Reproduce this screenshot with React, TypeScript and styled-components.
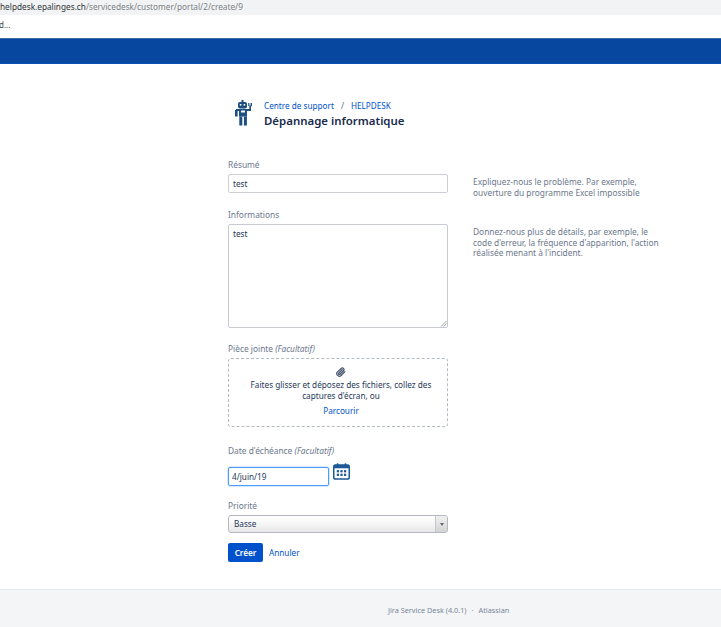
import React from "react";
import styled, { createGlobalStyle } from "styled-components";

const Global = createGlobalStyle`
  html, body { margin: 0; padding: 0; background: #fff; }
  body { font-family: "Noto Sans", "Open Sans", "Liberation Sans", sans-serif; font-size: 8.2px; color: #172b4d; overflow: hidden; }
`;

const Page = styled.div`
  width: 721px; height: 627px; display: flex; flex-direction: column; overflow: hidden;
`;
const UrlBar = styled.div`
  height: 15px; flex: none; background: #f1f3f4; font-size: 8.25px; line-height: 13px; color: #7d8185; white-space: nowrap;
  b { font-weight: 400; color: #303236; }
`;
const BookmarkBar = styled.div`
  height: 23px; flex: none; background: #fff; font-size: 8px; line-height: 20px; color: #444; margin-left: -1px;
`;
const Header = styled.div`
  height: 26px; flex: none; box-sizing: border-box; background: #0747a0; border-top: 1px solid #3a6aa8; border-bottom: 1px solid #0a50b4;
`;
const Main = styled.main`
  flex: 1; display: grid; grid-template-columns: 220px 190px; column-gap: 25px; align-content: start; padding: 35px 0 0 228px;
`;
const PageHead = styled.div`
  grid-column: 1 / 3; display: flex; gap: 12px; height: 42px; margin-bottom: 17px;
`;
const Avatar = styled.svg`
  width: 23px; height: 28px; flex: none; margin-top: 1px; margin-left: 1px;
`;
const HeadText = styled.div`
  display: flex; flex-direction: column;
`;
const Crumbs = styled.div`
  font-size: 8.2px; line-height: 13px; color: #0052cc; display: flex; gap: 7px;
  span { color: #5e6c84; }
`;
const Title = styled.h1`
  margin: 0; font-size: 11.45px; line-height: 18px; font-weight: 600; color: #172b4d;
`;
const Field = styled.div<{ $h: number }>`
  grid-column: 1; height: ${(p) => p.$h}px;
`;
const Help = styled.div<{ $h: number }>`
  grid-column: 2; height: ${(p) => p.$h}px; box-sizing: border-box; padding-top: 19px; font-size: 8.35px; line-height: 10.5px; color: #6b778c;
`;
const Label = styled.div`
  font-size: 8.35px; line-height: 13px; color: #6b778c; margin-bottom: 3px;
  em { font-style: italic; }
`;
const Input = styled.div`
  box-sizing: border-box; height: 19px; width: 100%; border: 1px solid #ccd0d6; border-radius: 2px; padding: 0 4px; font-size: 8.2px; line-height: 17px; color: #253858; background: #fff;
`;
const Area = styled.div`
  box-sizing: border-box; position: relative; height: 104px; border: 1px solid #c8ccd2; border-radius: 2px; padding: 2px 4px; font-size: 8.2px; line-height: 14px; color: #253858;
`;
const Grip = styled.svg`
  position: absolute; right: 0; bottom: 0; width: 7px; height: 7px;
`;
const Drop = styled.div`
  box-sizing: border-box; height: 69px; border: 1px dashed #b3bac5; border-radius: 3px; display: flex; flex-direction: column; align-items: center; text-align: center; padding: 8px 0 0 6px; font-size: 8.2px; line-height: 11px; color: #253858;
`;
const ClipIcon = styled.svg`
  width: 10px; height: 10px; margin-bottom: 2px; flex: none;
`;
const Browse = styled.a`
  color: #0052cc; margin-top: 4px; display: block;
`;
const DateRow = styled.div`
  display: flex; align-items: flex-start; gap: 4px; margin-top: 6px;
`;
const DateInput = styled.div`
  box-sizing: border-box; width: 101px; height: 19px; margin-top: 4px; border: 1px solid #4c9aff; border-radius: 2px; padding: 0 3px; font-size: 8.2px; line-height: 17px; color: #253858; box-shadow: 0 0 0 0.5px #b3d4ff;
`;
const CalIcon = styled.svg`
  width: 17px; height: 17px; flex: none;
`;
const Select = styled.div`
  box-sizing: border-box; height: 18px; border: 1px solid #b5b9bf; border-radius: 3px; display: flex; justify-content: space-between; background: linear-gradient(#fff, #f6f6f6 50%, #e6e6e6); font-size: 8.2px; line-height: 16px; color: #253858; padding-left: 5px; overflow: hidden;
`;
const Arrow = styled.div`
  width: 11px; border-left: 1px solid #c4c7cb; background: linear-gradient(#f0f0f0, #d4d4d4); display: flex; align-items: center; justify-content: center;
  &::after { content: ""; border-left: 2px solid transparent; border-right: 2px solid transparent; border-top: 3px solid #666; }
`;
const Actions = styled.div`
  display: flex; align-items: center; gap: 6px;
`;
const Primary = styled.button`
  width: 35px; height: 19px; border: 0; border-radius: 2px; padding: 0; background: #0052cc; color: #fff; font: 600 8.2px "Noto Sans", sans-serif;
`;
const Cancel = styled.a`
  font-size: 8.2px; color: #0052cc;
`;
const Footer = styled.footer`
  height: 38px; flex: none; box-sizing: border-box; background: #f4f5f7; border-top: 1px solid #e6e8ee; padding: 14px 0 0 388px; font-size: 7.3px; line-height: 12px; color: #7a869a; display: flex; gap: 5px;
`;

export default function App() {
  return (
    <Page>
      <Global />
      <UrlBar><b>helpdesk.epalinges.ch</b>/servicedesk/customer/portal/2/create/9</UrlBar>
      <BookmarkBar>d...</BookmarkBar>
      <Header />
      <Main>
        <PageHead>
          <Avatar viewBox="0 0 23 28" fill="#1d4f80">
            <rect x="12.5" y="0" width="2" height="2.5" />
            <rect x="9" y="2" width="9" height="6.5" rx="2" />
            <rect x="10" y="9" width="8" height="7.5" />
            <rect x="7" y="9" width="3" height="2" />
            <rect x="6" y="10" width="2.6" height="6.5" />
            <rect x="18" y="9" width="4" height="2" />
            <rect x="20.3" y="5.5" width="1.7" height="5" />
            <rect x="21.6" y="3" width="1.4" height="3.2" />
            <rect x="19.2" y="3" width="1.2" height="3" />
            <rect x="10.3" y="16.5" width="3" height="9" />
            <rect x="14.9" y="16.5" width="3" height="9" />
            <rect x="12" y="10.5" width="4" height="2" fill="#fff" />
            <rect x="10.8" y="4" width="1.6" height="1.6" fill="#fff" />
            <rect x="14.6" y="4" width="1.6" height="1.6" fill="#fff" />
          </Avatar>
          <HeadText>
            <Crumbs>Centre de support <span>/</span> HELPDESK</Crumbs>
            <Title>Dépannage informatique</Title>
          </HeadText>
        </PageHead>

        <Field $h={50}>
          <Label>Résumé</Label>
          <Input>test</Input>
        </Field>
        <Help $h={50}>Expliquez-nous le problème. Par exemple,<br />ouverture du programme Excel impossible</Help>

        <Field $h={134}>
          <Label>Informations</Label>
          <Area>
            test
            <Grip viewBox="0 0 7 7" stroke="#777" strokeWidth="0.7"><path d="M1 6.5 6.5 1M3.5 6.5 6.5 3.5" /></Grip>
          </Area>
        </Field>
        <Help $h={134}>Donnez-nous plus de détails, par exemple, le<br />code d'erreur, la fréquence d'apparition, l'action<br />réalisée menant à l'incident.</Help>

        <Field $h={102}>
          <Label>Pièce jointe <em>(Facultatif)</em></Label>
          <Drop>
            <ClipIcon viewBox="0 0 24 24" fill="none" stroke="#42526e" strokeWidth="3" strokeLinecap="round" strokeLinejoin="round">
              <path d="m21.44 11.05-9.19 9.19a6 6 0 0 1-8.49-8.49l8.57-8.57A4 4 0 1 1 18 8.84l-8.59 8.57a2 2 0 0 1-2.83-2.83l8.49-8.48" />
            </ClipIcon>
            Faites glisser et déposez des fichiers, collez des<br />captures d'écran, ou
            <Browse>Parcourir</Browse>
          </Drop>
        </Field>

        <Field $h={55}>
          <Label>Date d'échéance <em>(Facultatif)</em></Label>
          <DateRow>
            <DateInput>4/juin/19</DateInput>
            <CalIcon viewBox="0 0 18 18">
              <rect x="0.8" y="2" width="16.4" height="15" rx="2" fill="#fff" stroke="#1d5a96" strokeWidth="1.6" />
              <rect x="0.8" y="2" width="16.4" height="3.6" fill="#1d5a96" />
              <rect x="4" y="0.3" width="1.6" height="3" fill="#1d5a96" />
              <rect x="12.4" y="0.3" width="1.6" height="3" fill="#1d5a96" />
              <g fill="#1d5a96">
                <rect x="4" y="7.5" width="2.4" height="2.4" /><rect x="7.8" y="7.5" width="2.4" height="2.4" /><rect x="11.6" y="7.5" width="2.4" height="2.4" />
                <rect x="4" y="11.3" width="2.4" height="2.4" /><rect x="7.8" y="11.3" width="2.4" height="2.4" /><rect x="11.6" y="11.3" width="2.4" height="2.4" />
              </g>
            </CalIcon>
          </DateRow>
        </Field>

        <Field $h={44}>
          <Label>Priorité</Label>
          <Select>Basse<Arrow /></Select>
        </Field>

        <Field $h={24}>
          <Actions>
            <Primary>Créer</Primary>
            <Cancel>Annuler</Cancel>
          </Actions>
        </Field>
      </Main>
      <Footer><span>Jira Service Desk (4.0.1)</span><span>·</span><span>Atlassian</span></Footer>
    </Page>
  );
}
